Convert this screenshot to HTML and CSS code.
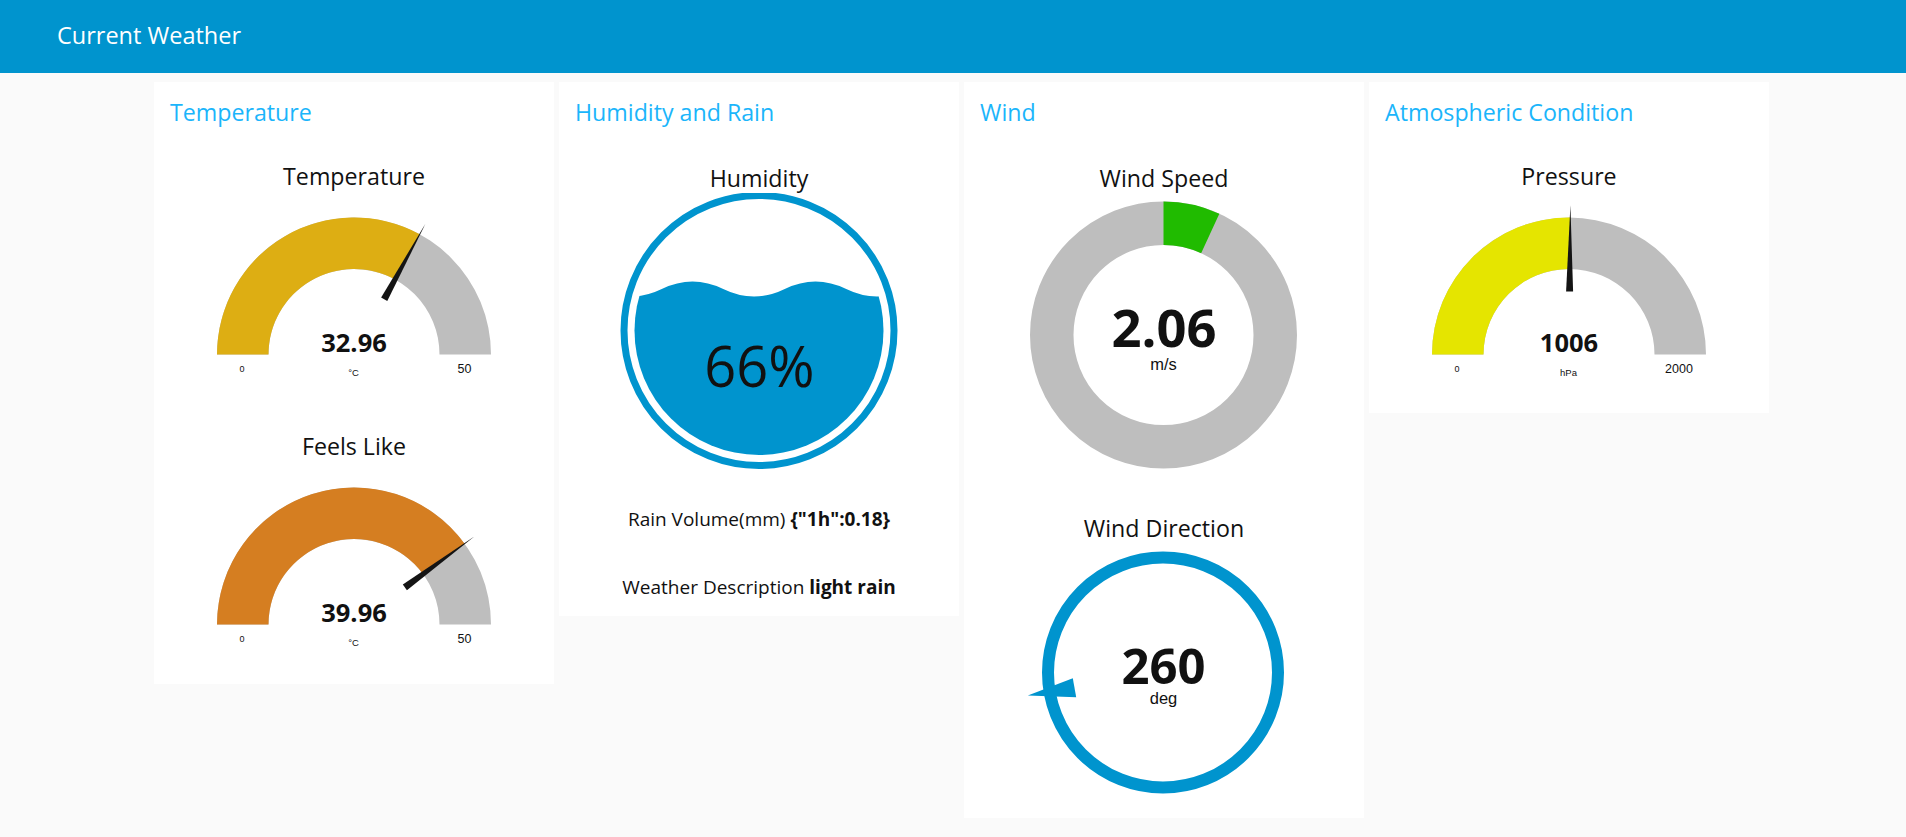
FILE: index.html
```html
<!DOCTYPE html>
<html lang="en">
<head>
<meta charset="utf-8">
<title>Current Weather</title>
<link rel="stylesheet" href="styles.css">
</head>
<body>
<header class="toolbar">
  <h1 class="toolbar-title">Current Weather</h1>
</header>
<main class="board">
  <section class="card card-temp">
    <h2 class="card-title">Temperature</h2>
    <div class="widget widget-first">
      <h3 class="widget-title">Temperature</h3>
      <svg class="gauge" width="300" height="200" viewBox="0 0 300 200">
        <path class="g-track" d="M13,163.5 A137,137 0 0 1 287,163.5 L235.5,163.5 A85.5,85.5 0 0 0 64.5,163.5 Z"/>
        <path class="fill-temp" d="M13,163.5 A137,137 0 0 1 215.71,43.28 L191.01,88.47 A85.5,85.5 0 0 0 64.5,163.5 Z"/>
        <polygon class="g-needle" points="183.28,109.90 177.14,106.54 221.46,32.75"/>
        <text class="g-value" x="150" y="160.5">32.96</text>
        <text class="g-min" x="38" y="180.5">0</text>
        <text class="g-max" x="260.5" y="181.5">50</text>
        <text class="g-unit" x="149.5" y="184.5">°C</text>
      </svg>
    </div>
    <div class="widget widget-next">
      <h3 class="widget-title">Feels Like</h3>
      <svg class="gauge" width="300" height="200" viewBox="0 0 300 200">
        <path class="g-track" d="M13,163.5 A137,137 0 0 1 287,163.5 L235.5,163.5 A85.5,85.5 0 0 0 64.5,163.5 Z"/>
        <path class="fill-feels" d="M13,163.5 A137,137 0 0 1 260.63,82.68 L219.04,113.06 A85.5,85.5 0 0 0 64.5,163.5 Z"/>
        <polygon class="g-needle" points="202.93,129.17 198.81,123.51 270.32,75.60"/>
        <text class="g-value" x="150" y="160.5">39.96</text>
        <text class="g-min" x="38" y="180.5">0</text>
        <text class="g-max" x="260.5" y="181.5">50</text>
        <text class="g-unit" x="149.5" y="184.5">°C</text>
      </svg>
    </div>
  </section>

  <section class="card card-humid">
    <h2 class="card-title">Humidity and Rain</h2>
    <div class="widget widget-first-low">
      <h3 class="widget-title">Humidity</h3>
      <svg class="liquid" width="300" height="280" viewBox="0 0 300 280">
        <defs>
          <clipPath id="liquid-clip">
            <circle cx="150" cy="137.5" r="124.5"/>
          </clipPath>
        </defs>
        <circle class="liquid-ring" cx="150" cy="137.5" r="135"/>
        <path class="liquid-wave" clip-path="url(#liquid-clip)" d="M-70.25,96 Q-39.5,81 -8.75,96 T52.75,96 T114.25,96 T175.75,96 T237.25,96 T298.75,96 T360.25,96 L360.25,300 L-70.25,300 Z"/>
        <text class="liquid-text" x="150.5" y="193.5">66%</text>
      </svg>
    </div>
    <p class="text-row text-rain">Rain Volume(mm) <b>{"1h":0.18}</b></p>
    <p class="text-row text-desc">Weather Description <b>light rain</b></p>
  </section>

  <section class="card card-wind">
    <h2 class="card-title">Wind</h2>
    <div class="widget widget-first-low">
      <h3 class="widget-title">Wind Speed</h3>
      <svg class="donut" width="300" height="280" viewBox="0 0 300 280">
        <circle class="donut-track" cx="149.5" cy="142" r="111.75"/>
        <path class="donut-fill" d="M149.5,8.5 A133.5,133.5 0 0 1 205.33,20.73 L187.14,60.24 A90,90 0 0 0 149.5,52 Z"/>
        <text class="d-value" x="150" y="153.5">2.06</text>
        <text class="d-unit" x="149.5" y="176.5">m/s</text>
      </svg>
    </div>
    <div class="widget widget-next">
      <h3 class="widget-title">Wind Direction</h3>
      <svg class="compass" width="300" height="260" viewBox="0 0 300 260">
        <circle class="compass-ring" cx="149" cy="129.5" r="115"/>
        <polygon class="compass-pointer" points="13.8,152.5 58.8,135.2 62.2,154.2"/>
        <text class="c-value" x="149.5" y="140.5">260</text>
        <text class="d-unit" x="149.5" y="161">deg</text>
      </svg>
    </div>
  </section>

  <section class="card card-atmo">
    <h2 class="card-title">Atmospheric Condition</h2>
    <div class="widget widget-first">
      <h3 class="widget-title">Pressure</h3>
      <svg class="gauge" width="300" height="200" viewBox="0 0 300 200">
        <path class="g-track" d="M13,163.5 A137,137 0 0 1 287,163.5 L235.5,163.5 A85.5,85.5 0 0 0 64.5,163.5 Z"/>
        <path class="fill-press" d="M13,163.5 A137,137 0 0 1 151.29,26.5 L150.81,78 A85.5,85.5 0 0 0 64.5,163.5 Z"/>
        <polygon class="g-needle" points="154.09,100.53 147.09,100.47 151.40,14.5"/>
        <text class="g-value" x="150" y="160.5">1006</text>
        <text class="g-min" x="38" y="180.5">0</text>
        <text class="g-max" x="260" y="181.5">2000</text>
        <text class="g-unit" x="149.5" y="184.5">hPa</text>
      </svg>
    </div>
  </section>
</main>
</body>
</html>
```

FILE: styles.css
```css
html, body {
  margin: 0;
  padding: 0;
}

body {
  background: #fafafa;
  font-family: "Open Sans", "Noto Sans", sans-serif;
  color: #111111;
}

.toolbar {
  height: 73px;
  background: #0094ce;
  padding-left: 57px;
  box-sizing: border-box;
}

.toolbar-title {
  margin: 0;
  font-size: 23.5px;
  font-weight: 400;
  line-height: 70px;
  color: #ffffff;
}

.board {
  display: flex;
  align-items: flex-start;
  gap: 5px;
  padding: 9px 0 0 154px;
}

.card {
  width: 400px;
  background: #ffffff;
  display: flex;
  flex-direction: column;
  align-items: center;
  padding-top: 15px;
  box-sizing: border-box;
}

.card-temp { padding-bottom: 23.5px; }
.card-humid { padding-bottom: 16.8px; }
.card-wind { padding-bottom: 15.5px; }
.card-atmo { padding-bottom: 22.5px; }

.card-title {
  align-self: stretch;
  margin: 0;
  padding-left: 16px;
  font-size: 23.2px;
  font-weight: 400;
  line-height: 30px;
  color: #1bb5fb;
}

.widget {
  display: flex;
  flex-direction: column;
  align-items: center;
}

.widget-first { margin-top: 33.5px; }
.widget-first-low { margin-top: 35.5px; }
.widget-next { margin-top: 40px; }

.widget-title {
  margin: 0;
  font-size: 23.2px;
  font-weight: 400;
  line-height: 30px;
  color: #111111;
  text-align: center;
}

svg {
  display: block;
}

.g-track { fill: #bebebe; }
.fill-temp { fill: #ddae13; }
.fill-feels { fill: #d57e21; }
.fill-press { fill: #e5e500; }
.g-needle { fill: #141414; }

.g-value {
  font-family: "Open Sans", sans-serif;
  font-size: 25.5px;
  font-weight: 700;
  fill: #111111;
  text-anchor: middle;
}

.g-min, .g-max, .g-unit {
  font-family: "Liberation Sans", Arial, sans-serif;
  fill: #111111;
  text-anchor: middle;
}

.g-min { font-size: 9px; }
.g-max { font-size: 12.5px; }
.g-unit { font-size: 9.5px; }

.liquid-ring {
  fill: none;
  stroke: #0094ce;
  stroke-width: 7px;
}

.liquid-wave { fill: #0094ce; }

.liquid-text {
  font-family: "Open Sans", sans-serif;
  font-size: 56px;
  font-weight: 400;
  fill: #111111;
  text-anchor: middle;
}

.text-row {
  margin: 0;
  font-size: 19px;
  line-height: 24px;
  color: #111111;
  text-align: center;
}

.text-row b { font-weight: 700; }

.text-rain { margin-top: 34.1px; }
.text-desc { margin-top: 44px; }
.card-humid { padding-bottom: 17.4px; }

.donut-track {
  fill: none;
  stroke: #bebebe;
  stroke-width: 43.5px;
}

.donut-fill { fill: #20bb00; }

.d-value {
  font-family: "Open Sans", sans-serif;
  font-size: 52.5px;
  font-weight: 700;
  fill: #111111;
  text-anchor: middle;
}

.d-unit {
  font-family: "Liberation Sans", Arial, sans-serif;
  font-size: 16.5px;
  fill: #111111;
  text-anchor: middle;
}

.compass-ring {
  fill: none;
  stroke: #0094ce;
  stroke-width: 12px;
}

.compass-pointer { fill: #0094ce; }

.c-value {
  font-family: "Open Sans", sans-serif;
  font-size: 49px;
  font-weight: 700;
  fill: #111111;
  text-anchor: middle;
}
```
